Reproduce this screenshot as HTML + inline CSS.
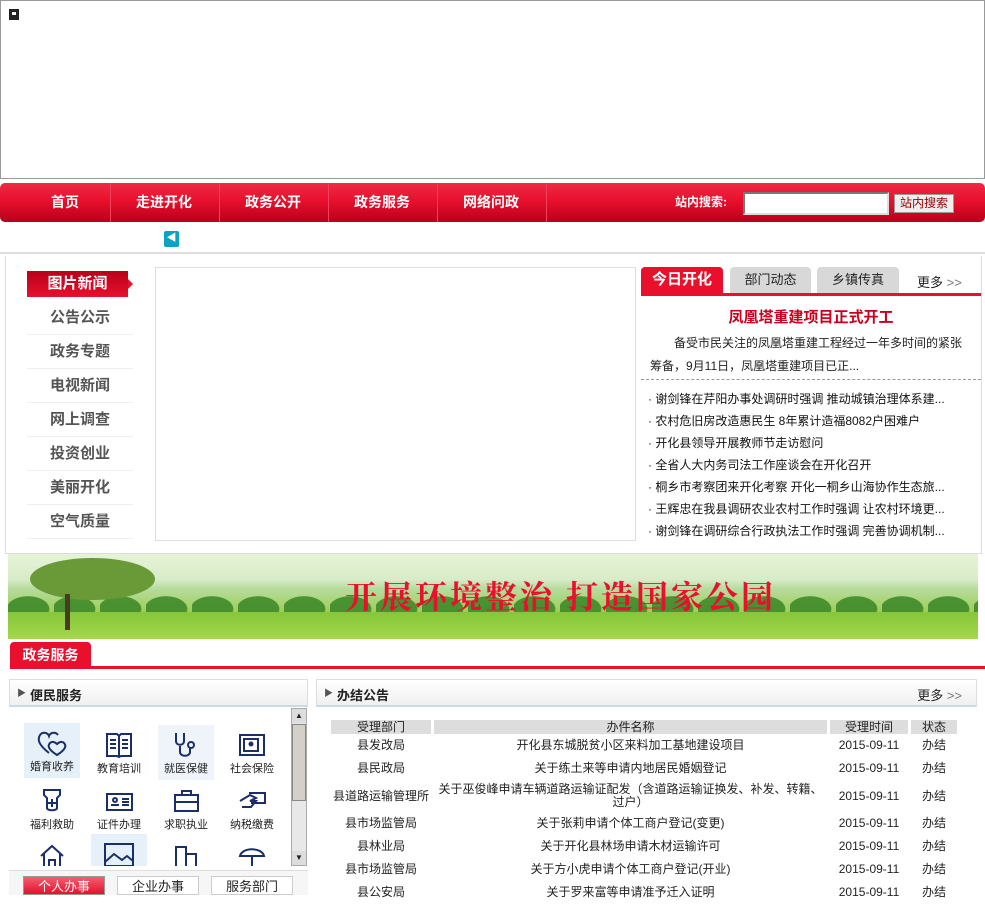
<!DOCTYPE html>
<html><head><meta charset="utf-8"><style>
*{margin:0;padding:0;box-sizing:border-box}
body{width:985px;height:895px;overflow:hidden;background:#fff;font-family:"Liberation Sans","Noto Sans CJK SC",sans-serif;font-size:12px;color:#222;position:relative}
.a{position:absolute}
.nav{left:0;top:183px;width:985px;height:39px;border-radius:5px;background:linear-gradient(#ee2a44,#e8102d 45%,#b8001c);}
.nav span{position:absolute;top:0;height:39px;line-height:39px;color:#fff;font-size:14px;font-weight:bold;text-align:center}
.nav i{position:absolute;top:0;width:1px;height:39px;background:#c8001e;border-right:1px solid #f0405a}
.menu div{position:absolute;left:27px;width:106px;height:34px;line-height:34px;text-align:center;font-size:15px;font-weight:bold;color:#555;border-bottom:1px solid #eee}
.tab{position:absolute;top:267px;height:26px;line-height:26px;text-align:center;font-size:13px;border-radius:4px 4px 0 0}
.list div{position:absolute;left:648px;font-size:12px;color:#111;white-space:nowrap}
.hdr{position:absolute;height:28px;border:1px solid #ddd;background:linear-gradient(#fff,#f0f0f0);border-bottom:2px solid #c9dbe6}
.hdr b{position:absolute;left:20px;top:5px;font-size:13px}
.hdr em{position:absolute;left:7px;top:6px;font-style:normal;font-size:9px;color:#555}
table{position:absolute;left:328px;top:720px;border-collapse:separate;border-spacing:3px 0;font-size:12px}
td{text-align:center;height:23px;line-height:13px}
th{background:#ddd;font-weight:normal;height:14px;line-height:14px}
.ic div{position:absolute;width:56px;height:55px;text-align:center;font-size:11px;color:#222}
.ic svg{display:block;margin:6px auto 1px}
</style></head><body>
<div class="a" style="left:0;top:0;width:985px;height:179px;border:1px solid #999"></div>
<div class="a" style="left:9px;top:9px;width:10px;height:11px;background:#222;border:3px solid #222"><div style="background:#fff;width:4px;height:3px"></div></div>

<div class="a nav">
<span style="left:30px;width:70px">首页</span><i style="left:110px"></i>
<span style="left:120px;width:88px">走进开化</span><i style="left:219px"></i>
<span style="left:229px;width:88px">政务公开</span><i style="left:328px"></i>
<span style="left:338px;width:88px">政务服务</span><i style="left:437px"></i>
<span style="left:447px;width:88px">网络问政</span><i style="left:546px"></i>
<span style="left:670px;width:62px;font-size:12px">站内搜索:</span>
</div>
<div class="a" style="left:743px;top:192px;width:146px;height:23px;background:#fff;border:2px solid #777;border-right-color:#ddd;border-bottom-color:#ddd"></div>
<div class="a" style="left:894px;top:194px;width:60px;height:19px;background:#eee;border:1px solid #999;color:#900;font-size:12px;line-height:17px;text-align:center">站内搜索</div>
<div class="a" style="left:164px;top:231px;width:15px;height:16px;background:#0aa3c4;border-radius:2px;color:#fff;font-size:10px;text-align:center;line-height:16px">◀</div>
<div class="a" style="left:0;top:252px;width:985px;height:2px;background:#ddd"></div>

<div class="a" style="left:5px;top:256px;width:977px;height:298px;border:1px solid #ddd;border-top:none"></div>
<div class="a" style="left:27px;top:271px;width:101px;height:26px;background:linear-gradient(#b8001a,#e8102d);color:#fff;font-size:15px;font-weight:bold;text-align:center;line-height:26px">图片新闻</div>
<div class="a" style="left:128px;top:279px;border-left:5px solid #e8102d;border-top:5px solid transparent;border-bottom:5px solid transparent"></div>
<div class="menu">
<div style="top:301px">公告公示</div><div style="top:335px">政务专题</div><div style="top:369px">电视新闻</div><div style="top:403px">网上调查</div><div style="top:437px">投资创业</div><div style="top:471px">美丽开化</div><div style="top:505px">空气质量</div>
</div>
<div class="a" style="left:155px;top:267px;width:481px;height:274px;border:1px solid #ddd"></div>

<div class="tab" style="left:641px;width:82px;background:#e8102d;color:#fff;font-size:15px;font-weight:bold">今日开化</div>
<div class="tab" style="left:730px;width:81px;background:#d8d8d8">部门动态</div>
<div class="tab" style="left:817px;width:82px;background:#d8d8d8">乡镇传真</div>
<div class="a" style="left:917px;top:272px;font-size:13px">更多 <span style="color:#777">&gt;&gt;</span></div>
<div class="a" style="left:641px;top:293px;width:340px;height:3px;background:#e8102d"></div>
<div class="a" style="left:641px;top:306px;width:340px;text-align:center;color:#c8001e;font-size:15px;font-weight:bold">凤凰塔重建项目正式开工</div>
<div class="a" style="left:650px;top:332px;width:318px;font-size:12px;line-height:23px;text-indent:24px">备受市民关注的凤凰塔重建工程经过一年多时间的紧张筹备，9月11日，凤凰塔重建项目已正...</div>
<div class="a" style="left:641px;top:379px;width:340px;border-top:1px dashed #999"></div>
<div class="list">
<div style="top:390px">· 谢剑锋在芹阳办事处调研时强调 推动城镇治理体系建...</div>
<div style="top:412px">· 农村危旧房改造惠民生 8年累计造福8082户困难户</div>
<div style="top:434px">· 开化县领导开展教师节走访慰问</div>
<div style="top:456px">· 全省人大内务司法工作座谈会在开化召开</div>
<div style="top:478px">· 桐乡市考察团来开化考察 开化一桐乡山海协作生态旅...</div>
<div style="top:500px">· 王辉忠在我县调研农业农村工作时强调 让农村环境更...</div>
<div style="top:522px">· 谢剑锋在调研综合行政执法工作时强调 完善协调机制...</div>
</div>

<div class="a" style="left:8px;top:554px;width:970px;height:85px;overflow:hidden;background:linear-gradient(#e6f3d8 0%,#d8ecc8 30%,#b8dca0 40%,#9ccd50 70%,#a6d84a 100%)">
<div class="a" style="left:0;top:35px;width:970px;height:35px;background:radial-gradient(ellipse 30px 18px at 20px 20px,#3f8a2a 70%,transparent 72%) 0 0/46px 35px repeat-x;opacity:.9"></div>
<div class="a" style="left:0;top:58px;width:970px;height:27px;background:linear-gradient(#86c63a,#a4d84a)"></div>
<div class="a" style="left:22px;top:4px;width:125px;height:42px;border-radius:50%;background:#6a9a38"></div>
<div class="a" style="left:57px;top:40px;width:5px;height:36px;background:#4a3a20"></div>
</div>
<div class="a" style="left:345px;top:572px;color:#e8102d;font-size:32px;letter-spacing:3px;font-family:'Noto Serif CJK SC',serif;font-weight:bold">开展环境整治 打造国家公园</div>

<div class="a" style="left:10px;top:642px;width:81px;height:25px;background:#e8102d;border-radius:4px 4px 0 0;color:#fff;font-weight:bold;font-size:14px;text-align:center;line-height:26px">政务服务</div>
<div class="a" style="left:10px;top:666px;width:975px;height:3px;background:#e8102d"></div>

<div class="hdr" style="left:9px;top:679px;width:299px"><em>▶</em><b>便民服务</b></div>
<div class="a" style="left:291px;top:708px;width:16px;height:158px;background:#e8e8e8;border:1px solid #aaa"></div>
<div class="a" style="left:292px;top:724px;width:14px;height:77px;background:#d4d0c8;border:1px solid #888"></div>
<div class="a" style="left:292px;top:709px;width:14px;height:14px;background:#ddd;font-size:8px;text-align:center;line-height:14px">▲</div>
<div class="a" style="left:292px;top:851px;width:14px;height:14px;background:#ddd;font-size:8px;text-align:center;line-height:14px">▼</div>
<div class="ic">
<div style="left:24px;top:723px;background:#e6f0f8"><svg width="34" height="28" viewBox="0 0 34 28" fill="none" stroke="#1a2f6a" stroke-width="2"><path d="M14 24C4 16 2 11 5 6c3-4 8-2 9 1 1-3 6-5 9-1"/><path d="M22 26c-8-5-10-9-7-12 2-2 5-1 7 1 2-2 5-3 7-1 3 3 1 7-7 12z"/></svg>婚育收养</div>
<div style="left:91px;top:725px"><svg width="30" height="28" viewBox="0 0 30 28" fill="none" stroke="#1a2f6a" stroke-width="2"><path d="M3 3h10l2 2 2-2h10v22H17l-2 1-2-1H3z M15 5v20 M6 9h6M6 13h6M6 17h6M18 9h6M18 13h6M18 17h6"/></svg>教育培训</div>
<div style="left:158px;top:725px;background:#eef4fa"><svg width="30" height="28" viewBox="0 0 30 28" fill="none" stroke="#1a2f6a" stroke-width="2"><path d="M5 2v8c0 5 8 5 8 0V2 M9 15v6c0 5 10 5 10 0v-4"/><circle cx="20" cy="14" r="3"/></svg>就医保健</div>
<div style="left:224px;top:725px"><svg width="30" height="28" viewBox="0 0 30 28" fill="none" stroke="#1a2f6a" stroke-width="2"><rect x="3" y="4" width="24" height="20"/><rect x="7" y="8" width="14" height="12"/><circle cx="14" cy="13" r="1.5" fill="#1a2f6a"/></svg>社会保险</div>
<div style="left:24px;top:781px"><svg width="30" height="28" viewBox="0 0 30 28" fill="none" stroke="#1a2f6a" stroke-width="2"><path d="M7 3h16v5l-3 3v10c0 3-10 3-10 0V11L7 8z M15 12v8M11 16h8"/></svg>福利救助</div>
<div style="left:91px;top:781px"><svg width="30" height="28" viewBox="0 0 30 28" fill="none" stroke="#1a2f6a" stroke-width="2"><rect x="3" y="7" width="25" height="16"/><path d="M7 18h8M18 12h7M18 15h7M18 18h7"/><circle cx="11" cy="13" r="2"/></svg>证件办理</div>
<div style="left:158px;top:781px"><svg width="30" height="28" viewBox="0 0 30 28" fill="none" stroke="#1a2f6a" stroke-width="2"><rect x="4" y="8" width="23" height="16"/><path d="M11 8V4h9v4M4 15h23"/></svg>求职执业</div>
<div style="left:224px;top:781px"><svg width="30" height="28" viewBox="0 0 30 28" fill="none" stroke="#1a2f6a" stroke-width="2"><path d="M12 6h16v10H14 M3 14l10-6 6 3-6 3h6l-5 6H5"/></svg>纳税缴费</div>
<div style="left:24px;top:836px;height:30px;overflow:hidden"><svg width="30" height="28" viewBox="0 0 30 28" fill="none" stroke="#1a2f6a" stroke-width="2"><path d="M4 14L15 4l11 10 M7 12v14h16V12 M12 26v-8h6v8"/></svg></div>
<div style="left:91px;top:834px;height:32px;overflow:hidden;background:#e6f0f8"><svg width="34" height="28" viewBox="0 0 34 28" fill="none" stroke="#1a2f6a" stroke-width="2"><rect x="3" y="4" width="28" height="22"/><path d="M3 22l9-8 8 6 5-4 6 5"/></svg></div>
<div style="left:158px;top:836px;height:30px;overflow:hidden"><svg width="30" height="28" viewBox="0 0 30 28" fill="none" stroke="#1a2f6a" stroke-width="2"><path d="M5 26V5h10v21 M15 12h10v14"/></svg></div>
<div style="left:224px;top:836px;height:30px;overflow:hidden"><svg width="30" height="28" viewBox="0 0 30 28" fill="none" stroke="#1a2f6a" stroke-width="2"><path d="M3 14C5 5 25 5 27 14H3z M15 14v12"/></svg></div>
</div>
<div class="a" style="left:9px;top:870px;width:299px;height:25px;border-top:1px solid #ddd;background:#f6f6f6"></div>
<div class="a" style="left:23px;top:876px;width:82px;height:19px;background:linear-gradient(#f06070,#e8102d);border:1px solid #999;color:#fff;font-size:13px;text-align:center;line-height:20px">个人办事</div>
<div class="a" style="left:117px;top:876px;width:82px;height:19px;background:#fff;border:1px solid #ccc;font-size:13px;text-align:center;line-height:20px">企业办事</div>
<div class="a" style="left:211px;top:876px;width:82px;height:19px;background:#fff;border:1px solid #ccc;font-size:13px;text-align:center;line-height:20px">服务部门</div>

<div class="hdr" style="left:316px;top:679px;width:661px"><em>▶</em><b>办结公告</b><span style="position:absolute;right:14px;top:5px;font-size:13px">更多 <span style="color:#777">&gt;&gt;</span></span></div>
<table>
<tr><th style="width:100px">受理部门</th><th style="width:393px">办件名称</th><th style="width:78px">受理时间</th><th style="width:46px">状态</th></tr>
<tr><td>县发改局</td><td>开化县东城脱贫小区来料加工基地建设项目</td><td>2015-09-11</td><td>办结</td></tr>
<tr><td>县民政局</td><td>关于练土来等申请内地居民婚姻登记</td><td>2015-09-11</td><td>办结</td></tr>
<tr><td style="height:32px">县道路运输管理所</td><td>关于巫俊峰申请车辆道路运输证配发（含道路运输证换发、补发、转籍、过户）</td><td>2015-09-11</td><td>办结</td></tr>
<tr><td>县市场监管局</td><td>关于张莉申请个体工商户登记(变更)</td><td>2015-09-11</td><td>办结</td></tr>
<tr><td>县林业局</td><td>关于开化县林场申请木材运输许可</td><td>2015-09-11</td><td>办结</td></tr>
<tr><td>县市场监管局</td><td>关于方小虎申请个体工商户登记(开业)</td><td>2015-09-11</td><td>办结</td></tr>
<tr><td>县公安局</td><td>关于罗来富等申请准予迁入证明</td><td>2015-09-11</td><td>办结</td></tr>
</table>
</body></html>
